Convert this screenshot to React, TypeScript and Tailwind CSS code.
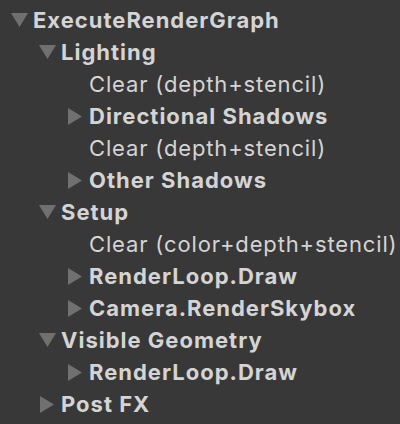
type Node = { label: string; depth: number; state: "open" | "closed" | "leaf" };

const rows: Node[] = [
  { label: "ExecuteRenderGraph", depth: 0, state: "open" },
  { label: "Lighting", depth: 1, state: "open" },
  { label: "Clear (depth+stencil)", depth: 2, state: "leaf" },
  { label: "Directional Shadows", depth: 2, state: "closed" },
  { label: "Clear (depth+stencil)", depth: 2, state: "leaf" },
  { label: "Other Shadows", depth: 2, state: "closed" },
  { label: "Setup", depth: 1, state: "open" },
  { label: "Clear (color+depth+stencil)", depth: 2, state: "leaf" },
  { label: "RenderLoop.Draw", depth: 2, state: "closed" },
  { label: "Camera.RenderSkybox", depth: 2, state: "closed" },
  { label: "Visible Geometry", depth: 1, state: "open" },
  { label: "RenderLoop.Draw", depth: 2, state: "closed" },
  { label: "Post FX", depth: 1, state: "closed" },
];

const indent = ["pl-[5px]", "pl-[33px]", "pl-[61px]"];

function Arrow({ state }: { state: Node["state"] }) {
  if (state === "leaf") return <span className="w-[28px] shrink-0" />;
  return (
    <span className="flex w-[28px] shrink-0 items-center justify-center">
      {state === "open" ? (
        <svg width="17" height="14" viewBox="0 0 17 14">
          <path d="M0 0 H17 L8.5 14 Z" fill="#707070" />
        </svg>
      ) : (
        <svg width="14" height="17" viewBox="0 0 14 17">
          <path d="M0 0 L14 8.5 L0 17 Z" fill="#707070" />
        </svg>
      )}
    </span>
  );
}

export default function App() {
  return (
    <div
      className="h-[424px] w-[400px] overflow-hidden bg-[#383838] pt-[4px] text-[22px] text-[#d4d4d4]"
      style={{ fontFamily: "Inter, 'Noto Sans', sans-serif" }}
    >
      {rows.map((r, i) => (
        <div key={i} className={`flex h-[32px] items-center ${indent[r.depth]}`}>
          <Arrow state={r.state} />
          <span
            className={`whitespace-nowrap ${
              r.state === "leaf" ? "font-normal tracking-[0.85px]" : "font-bold tracking-[1px]"
            }`}
          >
            {r.label}
          </span>
        </div>
      ))}
    </div>
  );
}
